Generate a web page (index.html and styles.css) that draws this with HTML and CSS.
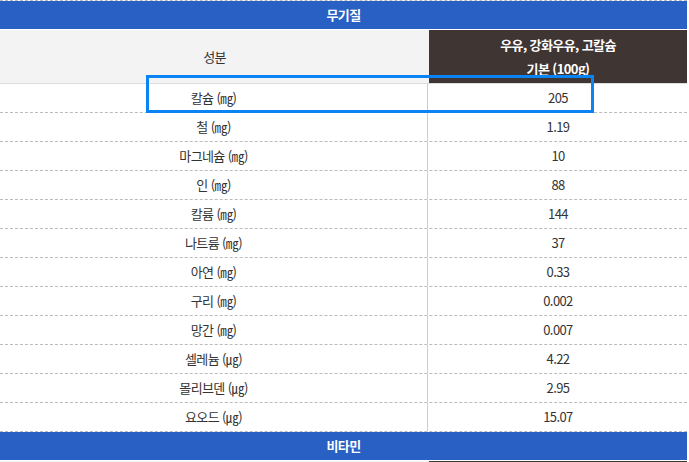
FILE: index.html
```html
<!DOCTYPE html>
<html lang="ko">
<head>
<meta charset="utf-8">
<link rel="stylesheet" href="styles.css">
</head>
<body>
<div class="table">
  <div class="section">무기질</div>
  <div class="head">
    <div class="head-name">성분</div>
    <div class="head-val">우유, 강화우유, 고칼슘<br>기본 (100g)</div>
  </div>
  <div class="row"><div class="name">칼슘 (㎎)</div><div class="val">205</div></div>
  <div class="row"><div class="name">철 (㎎)</div><div class="val">1.19</div></div>
  <div class="row"><div class="name">마그네슘 (㎎)</div><div class="val">10</div></div>
  <div class="row"><div class="name">인 (㎎)</div><div class="val">88</div></div>
  <div class="row"><div class="name">칼륨 (㎎)</div><div class="val">144</div></div>
  <div class="row"><div class="name">나트륨 (㎎)</div><div class="val">37</div></div>
  <div class="row"><div class="name">아연 (㎎)</div><div class="val">0.33</div></div>
  <div class="row"><div class="name">구리 (㎎)</div><div class="val">0.002</div></div>
  <div class="row"><div class="name">망간 (㎎)</div><div class="val">0.007</div></div>
  <div class="row"><div class="name">셀레늄 (㎍)</div><div class="val">4.22</div></div>
  <div class="row"><div class="name">몰리브덴 (㎍)</div><div class="val">2.95</div></div>
  <div class="row"><div class="name">요오드 (㎍)</div><div class="val">15.07</div></div>
  <div class="section">비타민</div>
  <div class="head head-stub">
    <div class="head-name"></div>
    <div class="head-val"></div>
  </div>
  <div class="highlight"></div>
</div>
</body>
</html>
```

FILE: styles.css
```css
html, body {
  margin: 0;
  padding: 0;
  background: #fff;
}
body {
  width: 689px;
  height: 462px;
  overflow: hidden;
  font-family: "Noto Sans CJK KR", "Noto Sans", sans-serif;
  font-size: 13px;
  color: #333;
  letter-spacing: -0.6px;
}
.table {
  position: relative;
  width: 687px;
  border-top: 1px dashed #bbb;
}
.section {
  height: 28px;
  line-height: 28px;
  background: #2860c4;
  color: #fff;
  font-weight: bold;
  text-align: center;
  border-bottom: 1px solid #fff;
}
.head {
  display: grid;
  grid-template-columns: 429px 258px;
  height: 53px;
  border-bottom: 1px solid #ddd;
}
.head-stub {
  height: 20px;
}
.head-name {
  background: #f3f3f3;
  display: flex;
  align-items: center;
  justify-content: center;
}
.head-val {
  background: #3f3533;
  color: #fff;
  font-weight: bold;
  text-align: center;
  line-height: 24px;
  display: flex;
  align-items: center;
  justify-content: center;
}
.row {
  display: grid;
  grid-template-columns: 428px 1px 258px;
  height: 28px;
  line-height: 28px;
  border-bottom: 1px dashed #bbb;
}
.row .name {
  text-align: center;
  border-right: 1px solid #ccc;
}
.row .val {
  grid-column: 3;
  text-align: center;
}
.highlight {
  position: absolute;
  left: 146px;
  top: 74px;
  width: 442px;
  height: 32px;
  border: 3px solid #0a84f5;
}
```
